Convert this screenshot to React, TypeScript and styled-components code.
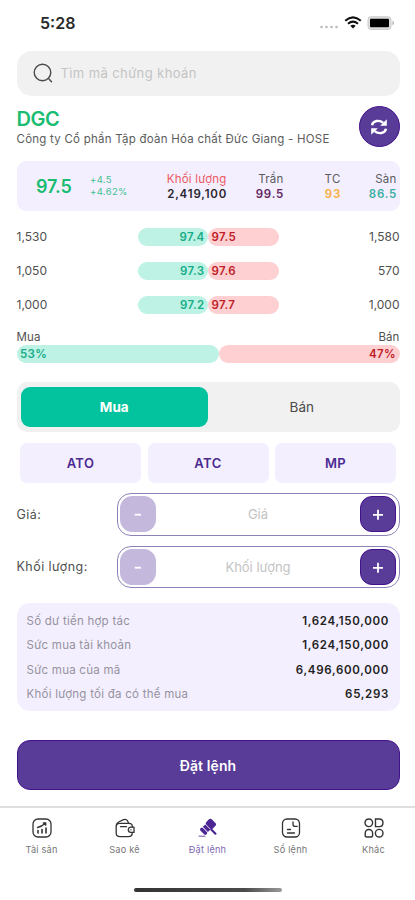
import React from "react";
import styled, { createGlobalStyle } from "styled-components";

const GlobalStyle = createGlobalStyle`
  * { box-sizing: border-box; }
  body { margin: 0; background: #fff; }
  button { border: 0; padding: 0; font: inherit; }
`;

const Screen = styled.div`
  width: 415px;
  height: 900px;
  display: flex;
  flex-direction: column;
  overflow: hidden;
  background: #fff;
  color: #505050;
  font-family: Inter, "Noto Sans", sans-serif;
  font-size: 12px;
`;

const StatusBar = styled.header`
  height: 51px;
  padding: 0 20px 5px 40px;
  display: flex;
  align-items: center;
  justify-content: space-between;
`;

const Clock = styled.span`
  color: #2a2a2a;
  font-size: 16px;
  font-weight: 600;
  line-height: 20px;
`;

const Content = styled.main`
  flex: 1;
  display: flex;
  flex-direction: column;
  padding: 0 15.5px 0 16.5px;
`;

const SearchBox = styled.div`
  height: 45px;
  border-radius: 15px;
  background: #f1f1f1;
  display: flex;
  align-items: center;
  gap: 8px;
  padding: 0 0 1px 16px;
`;

const Hint = styled.span<{ $spacing?: number }>`
  color: #c4c4c4;
  font-size: 13px;
  line-height: 18px;
  letter-spacing: ${(p) => p.$spacing ?? 0}px;
`;

const StockHeader = styled.section`
  height: 65px;
  display: flex;
  justify-content: space-between;
  padding-top: 10px;
`;

const Symbol = styled.h1`
  margin: 3px 0 0;
  color: #1abc72;
  font-size: 20px;
  font-weight: 600;
  line-height: 20px;
  letter-spacing: -0.5px;
`;

const Company = styled.p`
  margin: 3px 0 0;
  color: #5c5c5c;
  font-size: 11.5px;
  line-height: 15px;
  letter-spacing: 0.24px;
  white-space: nowrap;
`;

const RefreshButton = styled.button`
  width: 41px;
  height: 41px;
  border-radius: 50%;
  background: #583c98;
  border: 1px solid #43128b;
  display: flex;
  align-items: center;
  justify-content: center;
`;

const PricePanel = styled.section`
  height: 50px;
  border-radius: 9px;
  background: #f3effe;
  display: grid;
  grid-template-columns: 73.5px 53px 83.5px 57px 57px 56px;
  align-items: center;
`;

const LastPrice = styled.span`
  padding-left: 19.5px;
  color: #1abc72;
  font-size: 18px;
  font-weight: 600;
  letter-spacing: -0.1px;
`;

const Change = styled.div`
  color: #42bf91;
  font-size: 9.5px;
  line-height: 12px;
  letter-spacing: 0.35px;
`;

const Quote = styled.div<{ $color: string; $label?: string }>`
  display: flex;
  flex-direction: column;
  align-items: flex-end;
  padding-top: 1px;
  line-height: 15px;
  font-size: 11.5px;
  letter-spacing: 0.2px;
  white-space: nowrap;
  color: ${(p) => p.$label ?? "#5c5c5c"};
  strong {
    color: ${(p) => p.$color};
    font-size: 11.5px;
    font-weight: 600;
    letter-spacing: 0.8px;
    margin-right: -0.6px;
  }
`;

const Depth = styled.section`
  margin-top: 16.5px;
  display: flex;
  flex-direction: column;
  gap: 16px;
`;

const DepthRow = styled.div`
  height: 18px;
  display: grid;
  grid-template-columns: 121px 70.5px 70.5px 1fr;
  align-items: center;
  font-size: 12px;
`;

const Volume = styled.span<{ $end?: boolean }>`
  text-align: ${(p) => (p.$end ? "right" : "left")};
`;

const Bar = styled.div<{ $side: "buy" | "sell"; $grow?: number }>`
  height: 18px;
  line-height: 18px;
  border-radius: 9px;
  padding: 0 3.5px;
  flex: ${(p) => p.$grow ?? 1} 0 0;
  font-size: 11.5px;
  letter-spacing: 0.35px;
  font-weight: 600;
  background: ${(p) => (p.$side === "buy" ? "#bdf2e5" : "#ffd0d1")};
  color: ${(p) => (p.$side === "buy" ? "#17ad87" : "#bd2028")};
`;

const BidBar = styled(Bar)`
  text-align: right;
`;

const RatioLabels = styled.div`
  margin-top: 16px;
  height: 15px;
  line-height: 15px;
  display: flex;
  justify-content: space-between;
  font-size: 11.5px;
  letter-spacing: 0.1px;
`;

const RatioBar = styled.div`
  display: flex;
`;

const AskShare = styled(Bar)`
  text-align: right;
`;

const SideToggle = styled.section`
  margin-top: 19.5px;
  height: 50px;
  border-radius: 10px;
  padding: 5px 4px;
  display: grid;
  grid-template-columns: 187.5px 1fr;
  background: #f1f1f1;
`;

const SideButton = styled.button<{ $active?: boolean }>`
  border-radius: 9px;
  background: ${(p) => (p.$active ? "#02c39d" : "transparent")};
  color: ${(p) => (p.$active ? "#fff" : "#4a4a4a")};
  font-size: 13.5px;
  font-weight: ${(p) => (p.$active ? 700 : 400)};
`;

const OrderTypes = styled.section`
  margin: 11px 3.5px 0;
  display: grid;
  grid-template-columns: repeat(3, 1fr);
  gap: 6.5px;
`;

const TypeChip = styled.button`
  height: 40px;
  border-radius: 7px;
  background: #f3effe;
  color: #4b2a91;
  font-size: 13px;
  font-weight: 600;
  letter-spacing: 0.4px;
`;

const Field = styled.div`
  margin-top: 10px;
  height: 42.5px;
  display: grid;
  grid-template-columns: 100px 1fr;
  align-items: center;
  font-size: 12.5px;
  letter-spacing: 0.45px;
`;

const Stepper = styled.div`
  height: 42.5px;
  border: 1px solid #8d82b8;
  border-radius: 14px;
  padding: 0 2.5px;
  display: flex;
  align-items: center;
  justify-content: space-between;
`;

const StepButton = styled.button<{ $muted?: boolean }>`
  width: 36px;
  height: 36px;
  border-radius: 12px;
  background: ${(p) => (p.$muted ? "#c4b9dc" : "#583c98")};
  border: 1px solid ${(p) => (p.$muted ? "#c4b9dc" : "#43128b")};
  display: flex;
  align-items: center;
  justify-content: center;
`;

const Summary = styled.section`
  margin-top: 15px;
  height: 108px;
  border-radius: 13px;
  background: #f3effe;
  padding: 6px 11px 5px 10px;
  display: flex;
  flex-direction: column;
`;

const SummaryRow = styled.div`
  flex: 1;
  display: flex;
  align-items: center;
  justify-content: space-between;
  color: #96929f;
  font-size: 11.5px;
  letter-spacing: 0.25px;
  strong {
    color: #222;
    font-weight: 600;
    letter-spacing: 0.68px;
    margin-right: -0.5px;
  }
`;

const SubmitButton = styled.button`
  margin-top: 29px;
  height: 50px;
  border-radius: 13px;
  background: #583c98;
  border: 1px solid #43128b;
  color: #fff;
  font-size: 14px;
  font-weight: 600;
  letter-spacing: 0.1px;
`;

const TabBar = styled.nav`
  height: 72px;
  border-top: 2px solid #dedede;
  display: grid;
  grid-template-columns: repeat(5, 83px);
`;

const Tab = styled.div<{ $active?: boolean }>`
  padding-top: 10px;
  display: flex;
  flex-direction: column;
  align-items: center;
  gap: 4.5px;
  color: ${(p) => (p.$active ? "#7e68b2" : "#777")};
  font-size: 9.2px;
  letter-spacing: 0.2px;
  line-height: 13px;
`;

const HomeArea = styled.footer`
  height: 22px;
  display: flex;
  justify-content: center;
  padding-top: 9.5px;
`;

const HomeIndicator = styled.div`
  width: 148px;
  height: 4px;
  border-radius: 2px;
  background: linear-gradient(90deg, #333 0%, #4b4b4b 75%, #999 100%);
`;

const StatusIcons = () => (
  <svg width="76" height="16" viewBox="0 0 76 16">
    <g fill="#bbb">
      <circle cx="2.5" cy="12" r="1.3" />
      <circle cx="7.5" cy="12" r="1.3" />
      <circle cx="12.5" cy="12" r="1.3" />
      <circle cx="17.5" cy="12" r="1.3" />
    </g>
    <g fill="none" stroke="#111" strokeWidth="2">
      <path d="M26.2 5.7Q34 -1 41.8 5.7" />
      <path d="M29 8.7Q34 4.5 39 8.7" />
    </g>
    <path d="M31.3 10.8Q34 8.8 36.7 10.8L34 13.5Z" fill="#111" />
    <rect x="49" y="1.8" width="23" height="12.6" rx="3" fill="#dedede" stroke="#c9c9c9" />
    <rect x="51" y="3.8" width="19" height="8.4" rx="1" fill="#000" />
    <path d="M73.5 5.5Q76.5 8 73.5 10.5Z" fill="#aaa" />
  </svg>
);

const SearchIcon = () => (
  <svg width="20" height="20" viewBox="0 0 20 20" fill="none" stroke="#4a4a4a" strokeWidth="1.4" strokeLinecap="round">
    <circle cx="9.5" cy="9.5" r="8.3" />
    <path d="M16 16l2.5 2.7" />
  </svg>
);

const RefreshIcon = () => (
  <svg width="18" height="18" viewBox="0 0 18 18" fill="none" stroke="#fff" strokeWidth="2.4">
    <path d="M2 7.2C3 2.5 9.5 1.6 13.3 4.8" />
    <path d="M16.8 1.2V7.8H10.2Z" fill="#fff" stroke="none" />
    <path d="M16 10.8C15 15.5 8.5 16.4 4.7 13.2" />
    <path d="M1.2 16.8V10.2H7.8Z" fill="#fff" stroke="none" />
  </svg>
);

const MinusIcon = () => (
  <svg width="12" height="12" viewBox="0 0 12 12" stroke="#fff" strokeWidth="1.8">
    <path d="M2.7 6.7H9" />
  </svg>
);

const PlusIcon = () => (
  <svg width="12" height="12" viewBox="0 0 12 12" stroke="#fff" strokeWidth="1.8">
    <path d="M1 6.8H11M6 1.8V11.8" />
  </svg>
);

const AssetsIcon = () => (
  <svg width="20" height="20" viewBox="0 0 20 20" fill="none" stroke="#333" strokeWidth="1.3" strokeLinecap="round">
    <rect x="1" y="1" width="18" height="18" rx="5" />
    <path d="M6 15v-2.5M10 15v-3.5M14 15v-5" strokeWidth="1.6" />
    <path d="M5.5 9.5C9 9 11 7.5 13.5 5M11.3 5h2.4v2.3" />
  </svg>
);

const WalletIcon = () => (
  <svg width="20" height="20" viewBox="0 0 20 20" fill="none" stroke="#333" strokeWidth="1.3" strokeLinecap="round" strokeLinejoin="round">
    <path d="M1.2 8.5C1.2 6.6 2.6 5.3 4.5 5.3h9.5c2.2 0 3.3 1.2 3.3 3v.7M17.3 14.5c0 3-1.2 4.2-4 4.2H5c-2.6 0-3.8-1.3-3.8-3.8V7.5" />
    <path d="M1.4 7.2C1.5 5.6 2.2 4.7 3.6 4L8.5 1.7c1.6-.7 3-.4 3.9.9L13.5 5M5.5 8.7h6" />
    <path d="M19 9.2v5.2h-3.2c-3.3 0-3.3-5.2 0-5.2ZM15.8 11.8h.2" />
  </svg>
);

const GavelIcon = () => (
  <svg width="20" height="20" viewBox="0 0 20 20" fill="#4c2794">
    <g transform="rotate(-45 9.5 9)">
      <rect x="2" y="5" width="3.6" height="8.4" rx="1.4" />
      <rect x="6.3" y="5.6" width="3.4" height="7.2" />
      <rect x="10.3" y="4.6" width="7.6" height="9.2" rx="2" />
      <rect x="9.3" y="12.4" width="2.2" height="8" rx="1" />
    </g>
    <rect x="0.5" y="17.4" width="7" height="1.5" rx=".7" opacity=".55" />
  </svg>
);

const OrderBookIcon = () => (
  <svg width="20" height="20" viewBox="0 0 20 20" fill="none" stroke="#333" strokeWidth="1.3" strokeLinecap="round" strokeLinejoin="round">
    <rect x="1.5" y="1" width="17" height="18" rx="4.5" />
    <path d="M12 3.8v2.4c0 1.5.9 2.2 2.2 2.2h2M6.5 11.5h3M6.5 15h7" />
  </svg>
);

const MoreIcon = () => (
  <svg width="20" height="20" viewBox="0 0 20 20" fill="none" stroke="#333" strokeWidth="1.4">
    <circle cx="4.8" cy="4.8" r="3.8" />
    <path d="M11.5 1h4c4.6 0 4.6 7.6 0 7.6h-4Z" />
    <path d="M1.2 17.5v-2.3a3.7 3.7 0 0 1 7.4 0v2.3q0 1.5-1.5 1.5H2.7q-1.5 0-1.5-1.5Z" />
    <circle cx="15.2" cy="15.2" r="3.8" />
  </svg>
);

const depth = [
  ["1,530", "97.4", "97.5", "1,580"],
  ["1,050", "97.3", "97.6", "570"],
  ["1,000", "97.2", "97.7", "1,000"],
];

const balances = [
  ["Số dư tiền hợp tác", "1,624,150,000"],
  ["Sức mua tài khoản", "1,624,150,000"],
  ["Sức mua của mã", "6,496,600,000"],
  ["Khối lượng tối đa có thể mua", "65,293"],
];

const tabs = [
  { label: "Tài sản", Icon: AssetsIcon },
  { label: "Sao kê", Icon: WalletIcon },
  { label: "Đặt lệnh", Icon: GavelIcon, active: true },
  { label: "Sổ lệnh", Icon: OrderBookIcon },
  { label: "Khác", Icon: MoreIcon },
];

export default function App() {
  return (
    <Screen>
      <GlobalStyle />
      <StatusBar>
        <Clock>5:28</Clock>
        <StatusIcons />
      </StatusBar>
      <Content>
        <SearchBox>
          <SearchIcon />
          <Hint $spacing={0.4}>Tìm mã chứng khoán</Hint>
        </SearchBox>
        <StockHeader>
          <div>
            <Symbol>DGC</Symbol>
            <Company>Công ty Cổ phần Tập đoàn Hóa chất Đức Giang - HOSE</Company>
          </div>
          <RefreshButton aria-label="Làm mới"><RefreshIcon /></RefreshButton>
        </StockHeader>
        <PricePanel>
          <LastPrice>97.5</LastPrice>
          <Change>+4.5<br />+4.62%</Change>
          <Quote $color="#29252f" $label="#ec5a64">Khối lượng<strong>2,419,100</strong></Quote>
          <Quote $color="#63265f">Trần<strong>99.5</strong></Quote>
          <Quote $color="#f9ae42">TC<strong>93</strong></Quote>
          <Quote $color="#3caea3">Sàn<strong>86.5</strong></Quote>
        </PricePanel>
        <Depth>
          {depth.map(([bidVolume, bid, ask, askVolume]) => (
            <DepthRow key={bid}>
              <Volume>{bidVolume}</Volume>
              <BidBar $side="buy">{bid}</BidBar>
              <Bar $side="sell">{ask}</Bar>
              <Volume $end>{askVolume}</Volume>
            </DepthRow>
          ))}
        </Depth>
        <RatioLabels><span>Mua</span><span>Bán</span></RatioLabels>
        <RatioBar>
          <Bar $side="buy" $grow={53}>53%</Bar>
          <AskShare $side="sell" $grow={47}>47%</AskShare>
        </RatioBar>
        <SideToggle>
          <SideButton $active>Mua</SideButton>
          <SideButton>Bán</SideButton>
        </SideToggle>
        <OrderTypes>
          <TypeChip>ATO</TypeChip>
          <TypeChip>ATC</TypeChip>
          <TypeChip>MP</TypeChip>
        </OrderTypes>
        {["Giá", "Khối lượng"].map((name) => (
          <Field key={name}>
            <span>{name}:</span>
            <Stepper>
              <StepButton $muted aria-label="Giảm"><MinusIcon /></StepButton>
              <Hint>{name}</Hint>
              <StepButton aria-label="Tăng"><PlusIcon /></StepButton>
            </Stepper>
          </Field>
        ))}
        <Summary>
          {balances.map(([label, value]) => (
            <SummaryRow key={label}><span>{label}</span><strong>{value}</strong></SummaryRow>
          ))}
        </Summary>
        <SubmitButton>Đặt lệnh</SubmitButton>
      </Content>
      <TabBar>
        {tabs.map(({ label, Icon, active }) => (
          <Tab key={label} $active={active}><Icon />{label}</Tab>
        ))}
      </TabBar>
      <HomeArea><HomeIndicator /></HomeArea>
    </Screen>
  );
}
